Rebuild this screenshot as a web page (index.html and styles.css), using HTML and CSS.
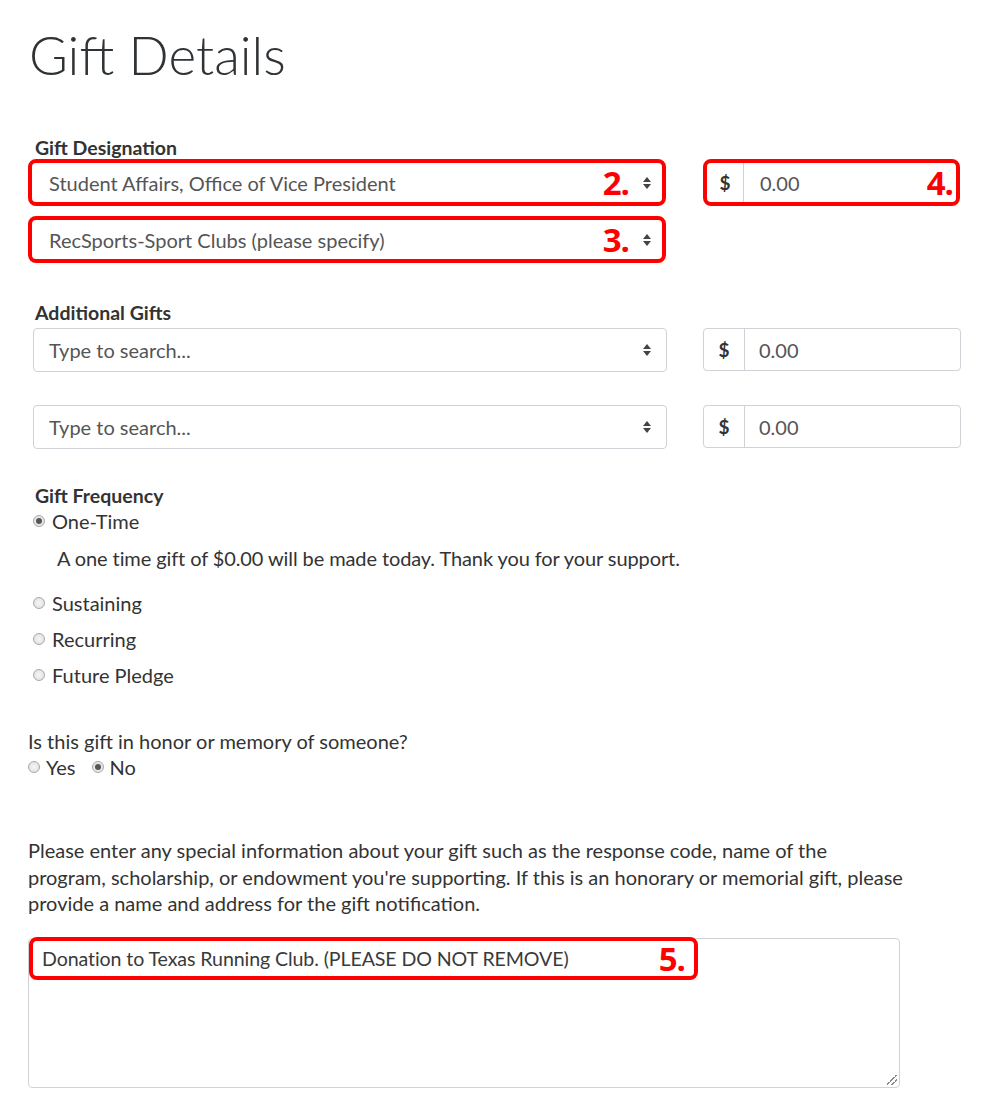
FILE: index.html
```html
<html>

<head>
    <title>Gift Details</title>

    <link rel="stylesheet" href="styles.css">
</head>

<body>
    <div class="page">
        <h1>Gift Details</h1>

        <section class="block designation">
            <div class="label">Gift Designation</div>
            <div class="gift-row">
                <div class="select marked">
                    <span class="value">Student Affairs, Office of Vice President</span>
                    <span class="mark">2.</span>
                    <span class="arrows"></span>
                </div>
                <div class="amount marked">
                    <span class="addon">$</span>
                    <span class="amount-value">0.00</span>
                    <span class="mark">4.</span>
                </div>
            </div>
            <div class="gift-row">
                <div class="select marked">
                    <span class="value">RecSports-Sport Clubs (please specify)</span>
                    <span class="mark">3.</span>
                    <span class="arrows"></span>
                </div>
            </div>
        </section>

        <section class="block additional">
            <div class="label">Additional Gifts</div>
            <div class="gift-row">
                <div class="select">
                    <span class="value">Type to search...</span>
                    <span class="arrows"></span>
                </div>
                <div class="amount">
                    <span class="addon">$</span>
                    <span class="amount-value">0.00</span>
                </div>
            </div>
            <div class="gift-row">
                <div class="select">
                    <span class="value">Type to search...</span>
                    <span class="arrows"></span>
                </div>
                <div class="amount">
                    <span class="addon">$</span>
                    <span class="amount-value">0.00</span>
                </div>
            </div>
        </section>

        <section class="block frequency">
            <div class="label">Gift Frequency</div>
            <div class="radio-line first"><span class="radio checked"></span>One-Time</div>
            <p class="freq-note">A one time gift of $0.00 will be made today. Thank you for your support.</p>
            <div class="radio-line"><span class="radio"></span>Sustaining</div>
            <div class="radio-line"><span class="radio"></span>Recurring</div>
            <div class="radio-line"><span class="radio"></span>Future Pledge</div>
        </section>

        <section class="honor">
            <div class="question">Is this gift in honor or memory of someone?</div>
            <div class="inline-radios">
                <span class="radio-inline"><span class="radio"></span>Yes</span>
                <span class="radio-inline"><span class="radio checked"></span>No</span>
            </div>
        </section>

        <section class="special">
            <p class="special-text">Please enter any special information about your gift such as the response code, name of the
                program, scholarship, or endowment you're supporting. If this is an honorary or memorial gift, please
                provide a name and address for the gift notification.</p>
            <div class="textarea">
                <div class="note-mark">
                    <span>Donation to Texas Running Club. (PLEASE DO NOT REMOVE)</span>
                    <span class="mark">5.</span>
                </div>
                <span class="grip"></span>
            </div>
        </section>
    </div>
</body>

</html>
```

FILE: styles.css
```css
body {
    margin: 0;
    background: #ffffff;
    color: #333333;
    font-family: Lato, "Open Sans", sans-serif;
}

.page {
    padding: 0 28px;
}

h1 {
    margin: 24px 0 0 1px;
    font-size: 53px;
    font-weight: 300;
    line-height: 62px;
    color: #2f3336;
}

.block {
    padding-left: 5px;
}

.label {
    font-size: 19.5px;
    font-weight: 700;
    color: #333333;
    line-height: 22px;
    padding-left: 2px;
}

.designation {
    margin-top: 51px;
}

.gift-row {
    display: flex;
    gap: 36px;
}

.gift-row + .gift-row {
    margin-top: 33px;
}

.designation .gift-row + .gift-row {
    margin-top: 10px;
}

.select {
    box-sizing: border-box;
    width: 634px;
    height: 44px;
    border: 1px solid #cfd3d8;
    border-radius: 4px;
    display: flex;
    align-items: center;
    padding: 0 15px;
    font-size: 20px;
    color: #555555;
}

.select .value {
    flex: 1;
}

.arrows {
    width: 8px;
    height: 12px;
    position: relative;
}

.arrows::before,
.arrows::after {
    content: "";
    position: absolute;
    left: 0;
    border-left: 4px solid transparent;
    border-right: 4px solid transparent;
}

.arrows::before {
    top: 0;
    border-bottom: 5px solid #444;
}

.arrows::after {
    bottom: 0;
    border-top: 5px solid #444;
}

.amount {
    box-sizing: border-box;
    width: 258px;
    height: 43px;
    border: 1px solid #cfd3d8;
    border-radius: 4px;
    display: flex;
    align-items: center;
}

.addon {
    width: 41px;
    height: 100%;
    box-sizing: border-box;
    border-right: 1px solid #cfd3d8;
    display: flex;
    align-items: center;
    justify-content: center;
    font-size: 19px;
    font-weight: 700;
    color: #333;
}

.amount-value {
    flex: 1;
    padding-left: 14px;
    font-size: 20px;
    color: #555555;
}

.mark {
    font-family: "Open Sans", "Liberation Sans", sans-serif;
    font-weight: 700;
    font-size: 33px;
    color: #ff0000;
    line-height: 1;
    letter-spacing: -1px;
}

.select.marked {
    width: 638px;
    height: 47px;
    margin-left: -5px;
    border: 4px solid #ff0000;
    border-radius: 8px;
    padding: 0 11px 0 17px;
}

.select.marked .mark {
    margin-right: 14px;
}

.amount.marked {
    width: 257px;
    height: 47px;
    margin-left: 1px;
    border: 4px solid #ff0000;
    border-radius: 8px;
}

.amount.marked .addon {
    width: 37px;
}

.amount.marked .amount-value {
    padding-left: 16px;
}

.amount.marked .mark {
    margin-right: 3px;
}

.additional {
    margin-top: 39px;
}

.additional .label {
    margin-bottom: 4px;
}

.frequency {
    margin-top: 36px;
}

.radio-line {
    display: flex;
    align-items: center;
    font-size: 20px;
    line-height: 24px;
    height: 36px;
    color: #333;
}

.radio-line.first {
    height: 28px;
}

.radio {
    display: inline-block;
    box-sizing: border-box;
    width: 12px;
    height: 12px;
    border-radius: 50%;
    border: 1px solid #a9a9a9;
    background: radial-gradient(circle, #f6f6f6 0%, #dcdcdc 100%);
    margin-right: 7px;
    position: relative;
}

.radio.checked::after {
    content: "";
    position: absolute;
    left: 2px;
    top: 2px;
    width: 6px;
    height: 6px;
    border-radius: 50%;
    background: #555;
}

.freq-note {
    margin: 11px 0 15px 24px;
    font-size: 20px;
    line-height: 24px;
    color: #333;
    letter-spacing: -0.1px;
}

.honor {
    margin-top: 35px;
    font-size: 20px;
    line-height: 26px;
    color: #333;
}

.inline-radios {
    display: flex;
    gap: 16px;
    align-items: center;
}

.radio-inline {
    display: inline-flex;
    align-items: center;
}

.radio-inline .radio {
    margin-right: 6px;
}

.special {
    margin-top: 57px;
}

.special-text {
    margin: 0;
    width: 878px;
    font-size: 20px;
    line-height: 26.5px;
    color: #333;
}

.textarea {
    position: relative;
    box-sizing: border-box;
    margin-top: 21px;
    width: 872px;
    height: 150px;
    border: 1px solid #cfd3d8;
    border-radius: 4px;
}

.note-mark {
    position: absolute;
    left: 0;
    top: -2px;
    box-sizing: border-box;
    width: 669px;
    height: 43px;
    border: 4px solid #ff0000;
    border-radius: 8px;
    display: flex;
    align-items: center;
    justify-content: space-between;
    padding: 0 9px 0 9px;
    font-size: 19.6px;
    letter-spacing: -0.1px;
    color: #3a3a3a;
}

.grip {
    position: absolute;
    right: 2px;
    bottom: 2px;
    width: 10px;
    height: 10px;
    background: linear-gradient(135deg, transparent 45%, #888 45%, #888 52%, transparent 52%, transparent 70%, #888 70%, #888 77%, transparent 77%);
}
```
